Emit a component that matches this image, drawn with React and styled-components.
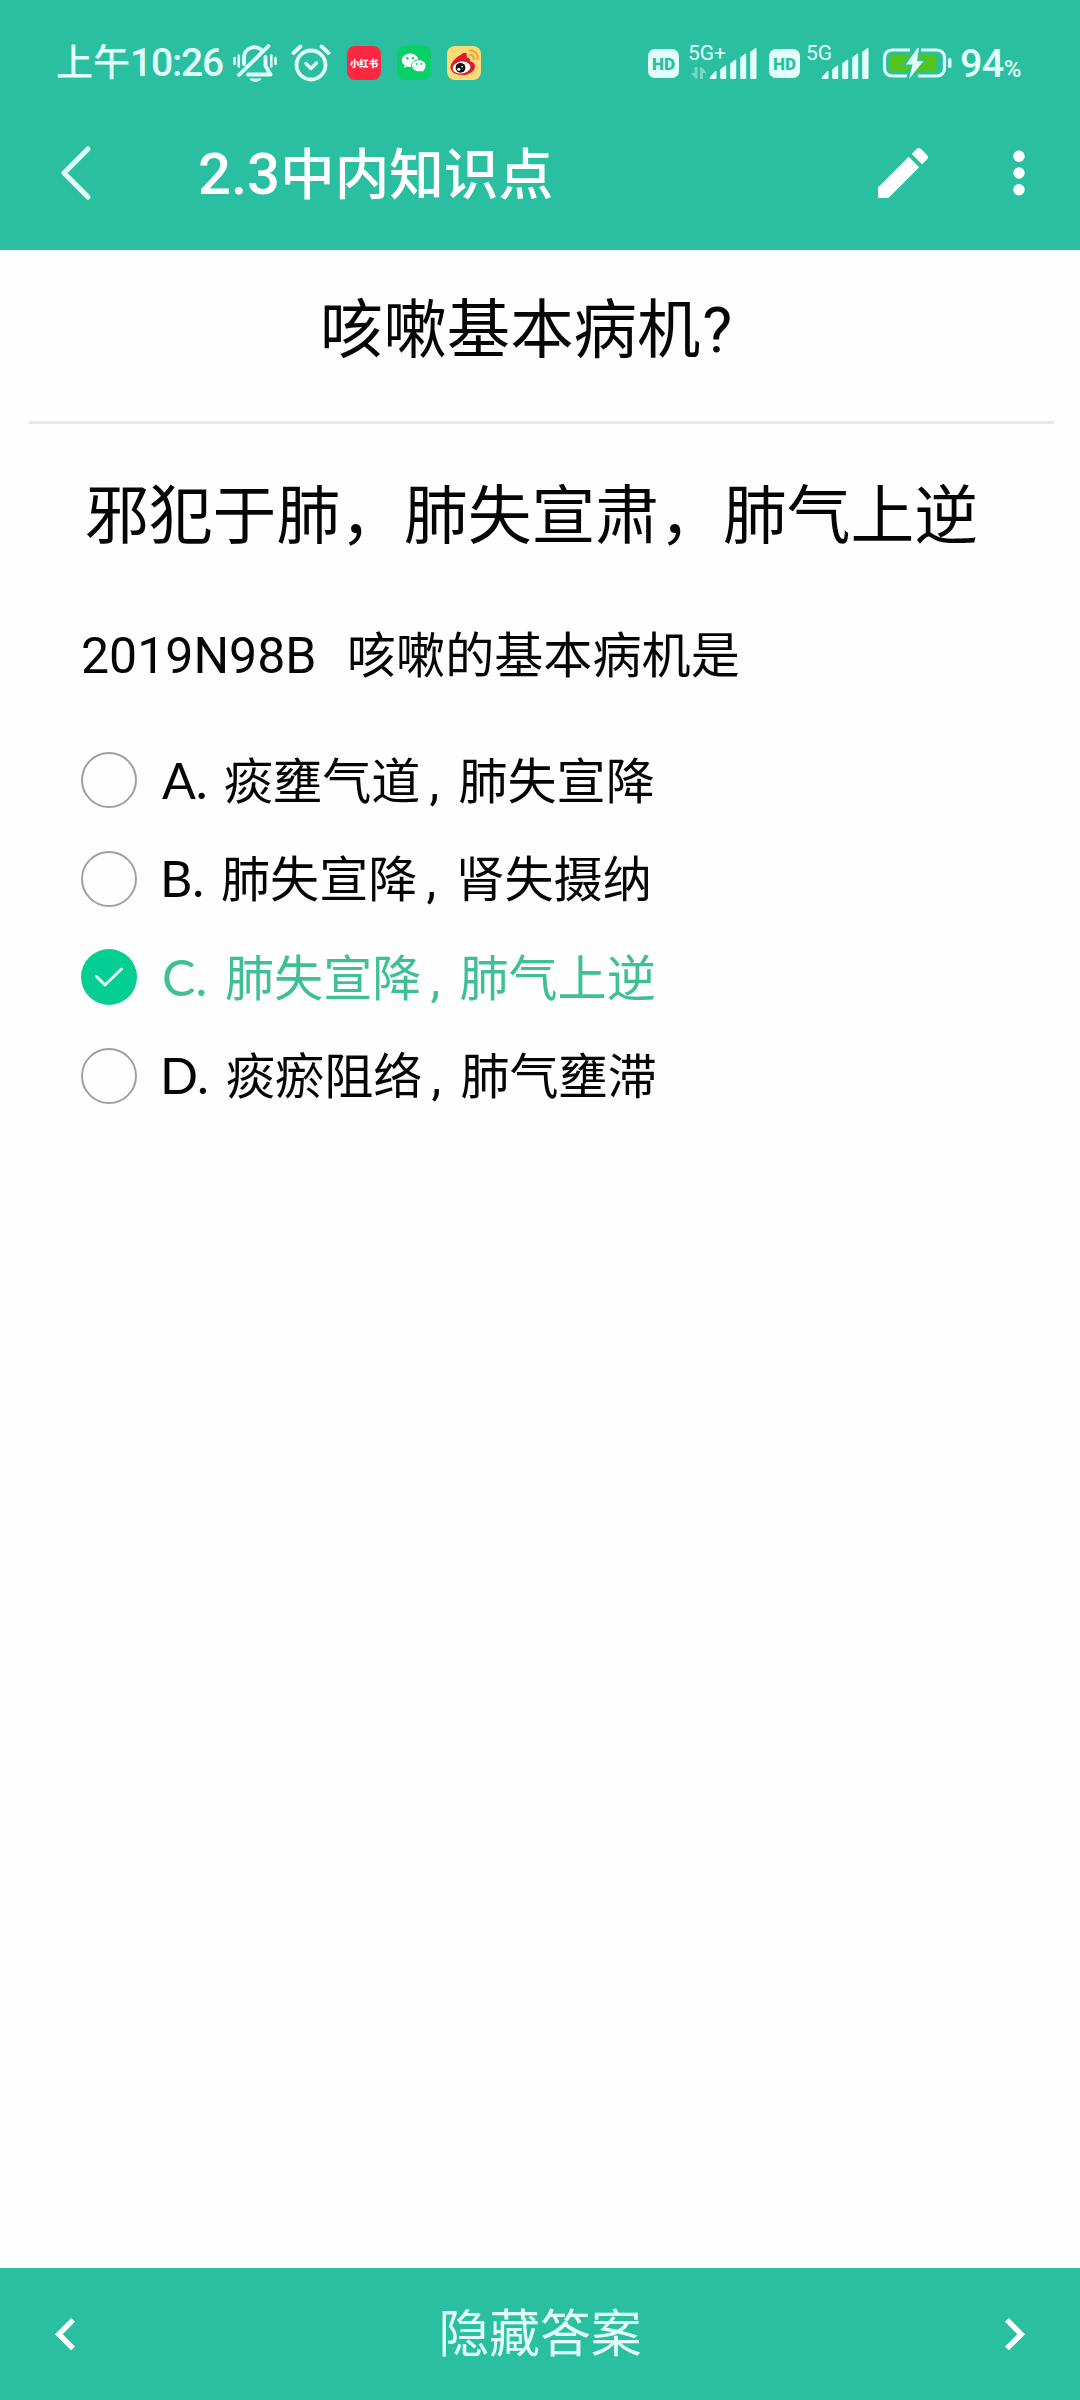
import React from "react";
import styled, { createGlobalStyle } from "styled-components";

const GlobalStyle = createGlobalStyle`
  * {
    box-sizing: border-box;
  }

  body {
    margin: 0;
    background: #fefefe;
    font-family: Roboto, "Noto Sans CJK SC", sans-serif;
  }
`;

const Screen = styled.div`
  display: flex;
  flex-direction: column;
  width: 1080px;
  height: 2400px;
  background: #fefefe;
  color: #050505;
  overflow: hidden;
`;

const Header = styled.header`
  height: 250px;
  background: #29bfa0;
  color: #fff;
`;

const StatusBar = styled.div`
  display: flex;
  justify-content: space-between;
  align-items: center;
  height: 126px;
  padding: 0 53px 0 56px;
  color: #e2fffa;
`;

const StatusGroup = styled.div`
  display: flex;
  align-items: center;
`;

const Clock = styled.span`
  width: 177px;
  padding-top: 1px;
  font-size: 37px;
  line-height: 44px;
  font-weight: 500;
  white-space: nowrap;
`;

const ClockTime = styled.span`
  font-size: 39px;
  letter-spacing: -1.2px;
`;

const AppIcon = styled.svg`
  display: block;
  width: 34px;
  height: 34px;
  margin-left: 16px;
`;

const HdBadge = styled.span`
  width: 31px;
  height: 29px;
  margin-left: ${props => props.$gap || 0}px;
  border-radius: 7px;
  background: #e2fffa;
  color: #29bfa0;
  font-size: 17px;
  font-weight: 900;
  line-height: 30px;
  text-align: center;
`;

const Network = styled.div`
  display: flex;
  flex-direction: column;
  gap: 5px;
  width: ${props => props.$width}px;
  height: 38px;
  margin-left: ${props => props.$gap}px;
  font-size: 21px;
  line-height: 18px;
`;

const Bars = styled.svg`
  display: block;
  width: 48px;
  height: 31px;
`;

const Percent = styled.span`
  display: flex;
  align-items: baseline;
  margin-left: 8px;
  width: 67px;
  padding-top: 2px;
  font-size: 39.5px;
  line-height: 44px;
  font-weight: 500;
  letter-spacing: -0.6px;
`;

const PercentSign = styled.span`
  font-size: 24px;
  line-height: 24px;
`;

const TitleBar = styled.div`
  display: flex;
  align-items: center;
  height: 94px;
  padding-left: 60px;
`;

const Title = styled.h1`
  flex: 1;
  margin: 2px 0 0 106px;
  font-size: 54.6px;
  line-height: 70px;
  font-weight: 500;
`;

const TitleNumber = styled.span`
  font-size: 58px;
`;

const Icon = styled.svg`
  display: block;
  flex: none;
  width: ${props => props.$w}px;
  height: ${props => props.$h}px;
  margin-left: ${props => props.$left || 0}px;
  margin-right: ${props => props.$right || 0}px;
`;

const Content = styled.main`
  flex: 1;
`;

const Question = styled.h2`
  height: 171px;
  margin: 0 26px 0 29px;
  padding: 40px 0 0 291px;
  font-size: 63.4px;
  line-height: 80px;
  font-weight: 400;
`;

const QuestionMark = styled.span`
  margin-left: 2px;
`;

const Divider = styled.div`
  height: 3px;
  margin: 0 26px 0 29px;
  background: #e8e8e8;
`;

const Answer = styled.p`
  margin: 0;
  padding: 53px 0 0 85px;
  font-size: 63.8px;
  line-height: 80px;
  white-space: nowrap;
`;

const Stem = styled.p`
  display: flex;
  margin: 67px 0 0 81px;
  font-size: 49.1px;
  line-height: 64px;
  white-space: nowrap;
`;

const StemCode = styled.span`
  width: 266px;
  font-size: 50px;
`;

const Options = styled.ul`
  margin: 43px 0 0;
  padding: 0 0 0 81px;
  list-style: none;
`;

const OptionRow = styled.li`
  display: flex;
  align-items: center;
  height: 98.5px;
  color: ${props => (props.$checked ? "#3fbf96" : "#050505")};
`;

const Radio = styled.span`
  display: flex;
  align-items: center;
  justify-content: center;
  width: 56px;
  height: 56px;
  margin-right: 25px;
  border-radius: 50%;
  border: ${props => (props.$checked ? "none" : "2px solid #a0a0a0")};
  background: ${props => (props.$checked ? "#04ce92" : "transparent")};
`;

const OptionText = styled.span`
  display: flex;
  padding-top: 3px;
  font-size: 49.1px;
  line-height: 64px;
  white-space: nowrap;
`;

const Letter = styled.span`
  width: ${props => props.$width}px;
  margin-left: ${props => props.$shift || 0}px;
  font-family: Lato, sans-serif;
  font-size: 50px;
  line-height: 60px;
`;

const Comma = styled.span`
  width: 38px;
  padding-left: 9px;
`;

const Footer = styled.footer`
  display: flex;
  align-items: center;
  justify-content: space-between;
  height: 132px;
  padding: 0 55px;
  background: #29bfa0;
  color: #e2fffa;
`;

const ToggleAnswer = styled.button`
  padding: 2px 0 0;
  border: 0;
  background: none;
  color: inherit;
  font-family: inherit;
  font-size: 50.8px;
  line-height: 64px;
`;

const options = [
  { letter: "A", width: 62, before: "痰壅气道", after: "肺失宣降" },
  { letter: "B", width: 61, shift: -2, before: "肺失宣降", after: "肾失摄纳" },
  { letter: "C", width: 63, before: "肺失宣降", after: "肺气上逆", checked: true },
  { letter: "D", width: 66, shift: -2, before: "痰瘀阻络", after: "肺气壅滞" }
];

const MutedBell = () => (
  <Icon viewBox="0 0 44 38" $w={44} $h={38} fill="none" stroke="currentColor" strokeWidth="3.8" strokeLinecap="round">
    <path d="M11 20V13a10.500 10.500 0 0 1 17-7.500" />
    <path d="M35.500 2L6 31" />
    <path d="M32.500 13v9l5 8.500H15" strokeLinejoin="round" />
    <path d="M1.500 14v6M5.800 11.500v11M38.300 11.500v11M42.500 14v6" strokeWidth="2.600" />
    <path d="M16.500 34.500h12c-2 4.500-10 4.500-12 0z" fill="currentColor" stroke="none" />
  </Icon>
);

const Alarm = () => (
  <Icon viewBox="0 0 40 38" $w={40} $h={38} $left={14} fill="none" stroke="currentColor" strokeLinecap="round">
    <circle cx="20" cy="21" r="14.500" strokeWidth="3.800" />
    <path d="M15 19.500l5 5 5.500-5.500" strokeWidth="3.400" strokeLinejoin="round" />
    <path d="M2.500 9l7-6.500M37.500 9l-7-6.500" strokeWidth="3.800" />
  </Icon>
);

const RedBook = () => (
  <AppIcon viewBox="0 0 34 34">
    <rect width="34" height="34" rx="8" fill="#ff2741" />
    <text x="17" y="20.800" fontSize="9.400" fontWeight="900" fill="#fff" textAnchor="middle">小红书</text>
  </AppIcon>
);

const WeChat = () => (
  <AppIcon viewBox="0 0 34 34">
    <rect width="34" height="34" rx="8" fill="#07d066" />
    <path d="M13 7.500c-4.700 0-8.200 3-8.200 6.700 0 2.200 1.200 4 3 5.200l-.8 2.600 3-1.500c1 .3 2 .4 3 .4 4.700 0 8.300-3 8.300-6.700s-3.600-6.700-8.300-6.700z" fill="#fff" />
    <path d="M22 13.800c-4.200 0-7.300 2.700-7.300 6s3.100 6 7.300 6c1 0 1.800-.1 2.600-.4l2.700 1.400-.7-2.300c1.500-1.100 2.500-2.700 2.500-4.700 0-3.300-3.100-6-7.100-6z" fill="#fff" stroke="#07d066" strokeWidth="1" />
    <g fill="#07d066">
      <circle cx="10.300" cy="12.300" r="1.200" />
      <circle cx="16" cy="12.300" r="1.200" />
      <circle cx="19.600" cy="18" r="1" />
      <circle cx="24.400" cy="18" r="1" />
    </g>
  </AppIcon>
);

const Weibo = () => (
  <AppIcon viewBox="0 0 34 34">
    <rect width="34" height="34" rx="8" fill="#fddc78" />
    <path d="M3.500 21.500c0-5 7-12.500 11.500-12.500 2 0 2.300 2 1.600 3.600 3-1.400 7.200-1.600 6.400 2.600 3 .8 5 2.400 5 5 0 5-6 8.800-12.500 8.800s-12-3-12-7.500z" fill="#e0182d" />
    <path d="M13 10c2-3.500 5-3.500 6.500-3l.5 5-6 2z" fill="#e0182d" />
    <ellipse cx="14.500" cy="21.500" rx="9" ry="6" transform="rotate(-8 14.500 21.500)" fill="#fff" />
    <circle cx="13.500" cy="21.800" r="4.900" fill="#111" />
    <circle cx="11.800" cy="23.300" r="1.500" fill="#fff" />
    <circle cx="15" cy="20.800" r=".8" fill="#fff" />
    <path d="M22.500 4.500c5-.8 9 3.500 8 8.500M23 9c2.500-.3 4.300 1.600 3.700 4" fill="none" stroke="#eea43a" strokeWidth="2.200" strokeLinecap="round" />
  </AppIcon>
);

const Signal = () => (
  <Bars viewBox="0 0 48 31" fill="currentColor">
    <path d="M1 29l5-5.500q1.500-1 1.500.5v6q0 1-1 1H2q-2 0-1-2z" />
    <path d="M11.200 21.500l4.500-3.500q1.500-1 1.500.500V30q0 1-1 1h-4q-1 0-1-1z" />
    <path d="M21.200 15.500l4.500-3.500q1.500-1 1.500.500V30q0 1-1 1h-4q-1 0-1-1z" />
    <path d="M31.200 9.500l4.500-3.500q1.500-1 1.500.500V30q0 1-1 1h-4q-1 0-1-1z" />
    <path d="M41.200 4l4.500-3.500q1.800-1 1.800.500V30q0 1-1 1h-4.300q-1 0-1-1z" />
  </Bars>
);

const Battery = () => (
  <Icon viewBox="0 0 70 32" $w={70} $h={32} $left={13}>
    <path d="M28 3H10a7.500 7.500 0 0 0-7.500 7.500v11A7.500 7.500 0 0 0 10 29h15M39 3h16a7.500 7.500 0 0 1 7.500 7.500v11A7.500 7.500 0 0 1 55 29H36" fill="none" stroke="currentColor" strokeWidth="3.200" />
    <rect x="7.500" y="7.500" width="47" height="17" rx="2" fill="#52c41e" />
    <path d="M36 0L19 19h9l-4 13 21-20h-9l3-12z" fill="#29bfa0" />
    <path d="M35.500 1L24 17.500h6.500L27 32l14.500-18h-6.500L37 1z" fill="currentColor" />
    <rect x="66" y="11" width="3.500" height="10" rx="1.700" fill="currentColor" />
  </Icon>
);

const DataArrows = () => (
  <Icon viewBox="0 0 18 12" $w={18} $h={12} $left={2} fill="currentColor" opacity=".4">
    <path d="M7.500 0v11.500h-2L1 6h3.500V0zM10 12V.500h2L16.500 6H13v6z" />
  </Icon>
);

const Chevron = ({ right }) => (
  <Icon viewBox="8 6 7.410 12" $w={20} $h={32.4} fill="#fff" transform={right ? "scale(-1 1)" : undefined}>
    <path d="M15.410 7.410L14 6l-6 6 6 6 1.410-1.410L10.830 12z" />
  </Icon>
);

class App extends React.Component {
  renderOption = (option) => (
    <OptionRow key={option.letter} $checked={option.checked}>
      <Radio $checked={option.checked}>
        {option.checked &&
          <Icon viewBox="0 0 28 20" $w={28} $h={20} fill="none" stroke="#e2fff4" strokeWidth="3" strokeLinecap="round" strokeLinejoin="round">
            <path d="M1.500 9.500l8.500 8.500L26.500 2" />
          </Icon>
        }
      </Radio>
      <OptionText>
        <Letter $width={option.width} $shift={option.shift}>{option.letter}.</Letter>
        <span>{option.before}</span>
        <Comma>,</Comma>
        <span>{option.after}</span>
      </OptionText>
    </OptionRow>
  );

  render() {
    return (
      <Screen>
        <GlobalStyle />
        <Header>
          <StatusBar>
            <StatusGroup>
              <Clock>上午<ClockTime>10:26</ClockTime></Clock>
              <MutedBell />
              <Alarm />
              <RedBook />
              <WeChat />
              <Weibo />
            </StatusGroup>
            <StatusGroup>
              <HdBadge>HD</HdBadge>
              <Network $width={21} $gap={9}>
                <span>5G+</span>
                <DataArrows />
              </Network>
              <Signal />
              <HdBadge $gap={12}>HD</HdBadge>
              <Network $width={15} $gap={6}>5G</Network>
              <Signal />
              <Battery />
              <Percent>94<PercentSign>%</PercentSign></Percent>
            </StatusGroup>
          </StatusBar>
          <TitleBar>
            <Icon viewBox="0 0 32 56" $w={32} $h={56} fill="none" stroke="#e2fffa" strokeWidth="5.200" strokeLinecap="round" strokeLinejoin="round">
              <path d="M28 4L4 28l24 24" />
            </Icon>
            <Title><TitleNumber>2.3</TitleNumber>中内知识点</Title>
            <Icon viewBox="3 3 18 18" $w={50} $h={50} $right={85} fill="#fff">
              <path d="M3 17.250V21h3.750L17.810 9.940l-3.750-3.750L3 17.250zM20.710 7.040a1 1 0 0 0 0-1.410l-2.340-2.340a1 1 0 0 0-1.410 0l-1.830 1.830 3.750 3.750 1.830-1.830z" />
            </Icon>
            <Icon viewBox="0 0 12 46" $w={12} $h={46} $right={55} fill="#fff">
              <circle cx="6" cy="6.300" r="5.700" />
              <circle cx="6" cy="23" r="5.700" />
              <circle cx="6" cy="39.700" r="5.700" />
            </Icon>
          </TitleBar>
        </Header>
        <Content>
          <Question>咳嗽基本病机<QuestionMark>?</QuestionMark></Question>
          <Divider />
          <Answer>邪犯于肺，肺失宣肃，肺气上逆</Answer>
          <Stem>
            <StemCode>2019N98B</StemCode>
            <span>咳嗽的基本病机是</span>
          </Stem>
          <Options>{options.map(this.renderOption)}</Options>
        </Content>
        <Footer>
          <Chevron />
          <ToggleAnswer type="button">隐藏答案</ToggleAnswer>
          <Chevron right />
        </Footer>
      </Screen>
    );
  }
}

export default App;
